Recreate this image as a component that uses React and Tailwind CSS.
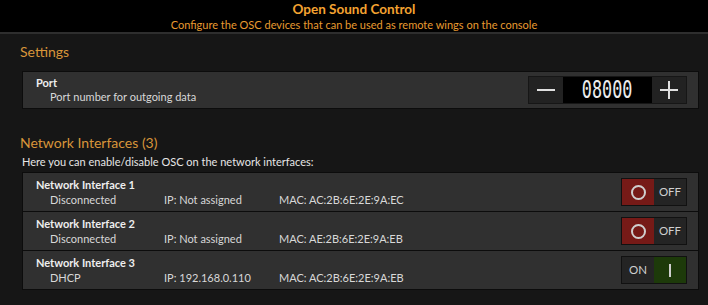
import React from 'react';

const font = { fontFamily: 'Lato, "Noto Sans", sans-serif' };

const interfaces = [
    { name: 'Network Interface 1', status: 'Disconnected', ip: 'IP: Not assigned', mac: 'MAC: AC:2B:6E:2E:9A:EC', on: false },
    { name: 'Network Interface 2', status: 'Disconnected', ip: 'IP: Not assigned', mac: 'MAC: AE:2B:6E:2E:9A:EB', on: false },
    { name: 'Network Interface 3', status: 'DHCP', ip: 'IP: 192.168.0.110', mac: 'MAC: AC:2B:6E:2E:9A:EB', on: true },
];

const Toggle = ({ on }) => {
    // switch used on every interface row
    if (on) {
        return (
            <div className="flex h-[28px] w-[66px] border border-[#111] bg-[#111]">
                <div className="flex w-1/2 items-center justify-center bg-[#242424] text-[11.5px] text-[#d0d0d0]">ON</div>
                <div className="flex w-1/2 items-center justify-center bg-[#1d3a0a]">
                    <div className="h-[13px] w-[2px] bg-[#cfcfcf]" />
                </div>
            </div>
        );
    }
    return (
        <div className="flex h-[28px] w-[66px] border border-[#111] bg-[#111]">
            <div className="flex w-1/2 items-center justify-center bg-[#761a17]">
                <div className="h-[15px] w-[15px] rounded-full border-2 border-[#cfcfcf]" />
            </div>
            <div className="flex w-1/2 items-center justify-center bg-[#242424] text-[11.5px] text-[#d0d0d0]">OFF</div>
        </div>
    );
};

const App = () => {
    return (
        <div style={font} className="h-[305px] w-[708px] overflow-hidden bg-[#161616] text-[#e0e0e0]">
            {/* header */}
            <div className="flex h-[34px] flex-col items-center border-b-2 border-[#2e2e2e] bg-black pt-[1px]">
                <div className="text-[13.5px] font-bold leading-[17px] text-[#f4a331]">Open Sound Control</div>
                <div className="text-[11px] leading-[14px] text-[#e89b30]">Configure the OSC devices that can be used as remote wings on the console</div>
            </div>

            <div className="pl-[20px] pr-[9px] pt-[8px]">
                <div className="text-[14px] leading-[20px] text-[#d8953a]">Settings</div>

                <div className="ml-[2px] mt-[9px] flex h-[38px] items-center justify-between border border-[#0c0c0c] bg-[#303030] pl-[13px] pr-[11px]">
                    <div className="leading-[14px]">
                        <div className="text-[11px] font-bold text-[#eeeeee]">Port</div>
                        <div className="pl-[14px] text-[11px] text-[#d8d8d8]">Port number for outgoing data</div>
                    </div>
                    <div className="flex h-[28px] border border-[#161616] bg-[#161616]">
                        <div className="flex w-[34px] items-center justify-center bg-[#222]">
                            <div className="h-[2px] w-[18px] bg-[#e0e0e0]" />
                        </div>
                        <div className="flex w-[89px] items-center justify-center bg-black">
                            <span
                                className="inline-block scale-x-[0.7] text-[24px] leading-[24px] text-[#ececec]"
                                style={{ fontFamily: '"DejaVu Sans Mono", monospace' }}
                            >
                                08000
                            </span>
                        </div>
                        <div className="relative flex w-[34px] items-center justify-center bg-[#222]">
                            <div className="h-[2px] w-[18px] bg-[#e0e0e0]" />
                            <div className="absolute h-[18px] w-[2px] bg-[#e0e0e0]" />
                        </div>
                    </div>
                </div>

                <div className="mt-[24px] text-[14px] leading-[20px] text-[#d8953a]">Network Interfaces (3)</div>
                <div className="ml-[2px] mt-[1px] text-[11px] leading-[15px] text-[#e6e6e6]">Here you can enable/disable OSC on the network interfaces:</div>

                <div className="ml-[2px] mt-[3px] border border-[#0c0c0c] bg-[#0c0c0c]">
                    {interfaces.map((itf, i) => (
                        <div key={itf.name} className={`flex h-[38px] items-center justify-between bg-[#303030] pl-[13px] pr-[11px] ${i > 0 ? 'mt-[1px]' : ''}`}>
                            <div className="leading-[15px]">
                                <div className="text-[11px] font-bold text-[#eeeeee]">{itf.name}</div>
                                <div className="flex text-[11px] text-[#d8d8d8]">
                                    <span className="w-[128px] pl-[14px]">{itf.status}</span>
                                    <span className="w-[115px]">{itf.ip}</span>
                                    <span>{itf.mac}</span>
                                </div>
                            </div>
                            <Toggle on={itf.on} />
                        </div>
                    ))}
                </div>
            </div>
        </div>
    );
};

export default App;
